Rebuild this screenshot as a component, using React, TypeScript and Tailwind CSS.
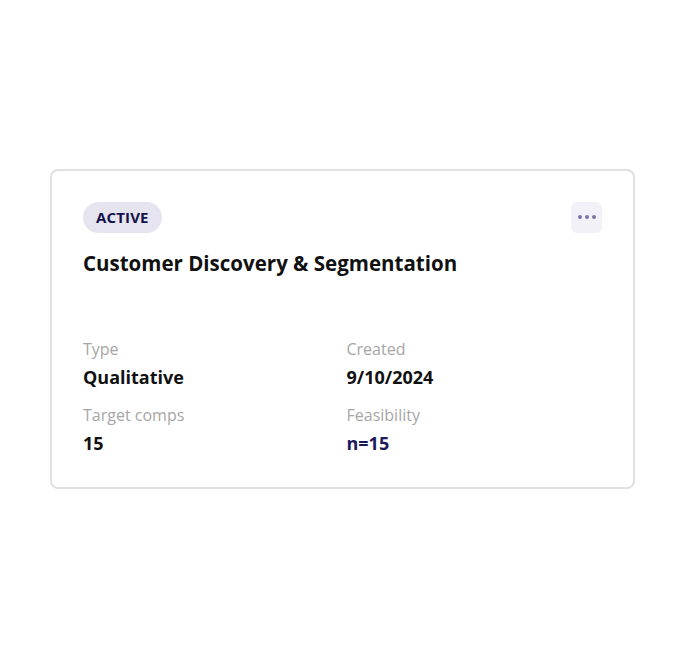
export default function App() {
  const fields = [
    { label: 'Type', value: 'Qualitative' },
    { label: 'Created', value: '9/10/2024' },
    { label: 'Target comps', value: '15' },
    { label: 'Feasibility', value: 'n=15', accent: true },
  ];

  return (
    <div
      className="flex min-h-[657px] w-full items-center justify-center bg-white"
      style={{ fontFamily: '"Open Sans", sans-serif' }}
    >
      <div className="mr-[1px] w-[585px] rounded-lg border-2 border-[#e0e0e0] bg-white pl-[31px] pr-[31px] pt-[31px] pb-8">
        <div className="flex items-center justify-between">
          <span className="flex h-[31px] items-center rounded-full bg-[#e6e5ef] px-[13px] text-[15px] font-bold tracking-[0.01em] text-[#14124a]">
            ACTIVE
          </span>
          <button
            type="button"
            className="flex h-[31px] w-[31px] items-center justify-center gap-[3px] rounded-md bg-[#f2f1f7]"
          >
            <span className="h-[4px] w-[4px] rounded-full bg-[#7a74a6]" />
            <span className="h-[4px] w-[4px] rounded-full bg-[#7a74a6]" />
            <span className="h-[4px] w-[4px] rounded-full bg-[#7a74a6]" />
          </button>
        </div>
        <h2 className="mt-4 text-[20.5px] leading-7 font-bold text-[#111]">
          Customer Discovery &amp; Segmentation
        </h2>
        <div className="mt-[62px] grid grid-cols-2 gap-x-2 gap-y-4">
          {fields.map((f) => (
            <div key={f.label}>
              <div className="mb-1.5 text-[16px] leading-5 text-[#a6a6a6]">{f.label}</div>
              <div
                className={`text-[18px] leading-6 font-bold ${f.accent ? 'text-[#1d1a5c]' : 'text-[#111]'}`}
              >
                {f.value}
              </div>
            </div>
          ))}
        </div>
      </div>
    </div>
  );
}
